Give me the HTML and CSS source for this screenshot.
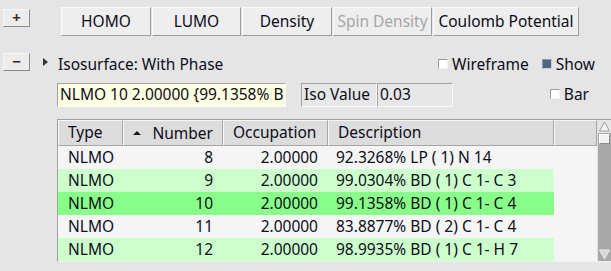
FILE: index.html
```html
<!DOCTYPE html>
<html>
<head>
<meta charset="utf-8">
<link rel="stylesheet" href="styles.css">
</head>
<body>
<div class="row1">
  <div class="small-btn">+</div>
  <div class="btn-group">
    <div class="btn w-homo">HOMO</div>
    <div class="btn w-lumo">LUMO</div>
    <div class="btn w-dens">Density</div>
    <div class="btn w-spin disabled">Spin Density</div>
    <div class="btn w-coul">Coulomb Potential</div>
  </div>
</div>
<div class="row2">
  <div class="small-btn">−</div>
  <div class="expander"></div>
  <div class="label">Isosurface: With Phase</div>
  <div class="checks">
    <div class="check"><span class="box"></span><span class="label">Wireframe</span></div>
    <div class="check show"><span class="box checked"></span><span class="label">Show</span></div>
  </div>
</div>
<div class="row3">
  <div class="field yellow">NLMO 10 2.00000 {99.1358% B</div>
  <div class="field iso">Iso Value</div>
  <div class="field val">0.03</div>
  <div class="check bar"><span class="box"></span><span class="label">Bar</span></div>
</div>
<div class="table">
  <div class="grid-area">
    <div class="grid head">
      <div class="hc">Type</div>
      <div class="hc right"><span class="sort"></span><span>Number</span></div>
      <div class="hc">Occupation</div>
      <div class="hc">Description</div>
      <div class="hc"></div>
    </div>
    <div class="grid row plain">
      <div class="c">NLMO</div><div class="c r">8</div><div class="c r">2.00000</div><div class="c d">92.3268% LP ( 1) N 14</div><div class="c x"></div>
    </div>
    <div class="grid row light">
      <div class="c">NLMO</div><div class="c r">9</div><div class="c r">2.00000</div><div class="c d">99.0304% BD ( 1) C 1- C 3</div><div class="c x"></div>
    </div>
    <div class="grid row bright">
      <div class="c">NLMO</div><div class="c r">10</div><div class="c r">2.00000</div><div class="c d">99.1358% BD ( 1) C 1- C 4</div><div class="c x"></div>
    </div>
    <div class="grid row plain">
      <div class="c">NLMO</div><div class="c r">11</div><div class="c r">2.00000</div><div class="c d">83.8877% BD ( 2) C 1- C 4</div><div class="c x"></div>
    </div>
    <div class="grid row light">
      <div class="c">NLMO</div><div class="c r">12</div><div class="c r">2.00000</div><div class="c d">98.9935% BD ( 1) C 1- H 7</div><div class="c x"></div>
    </div>
  </div>
  <div class="scrollbar">
    <div class="sb-up"><svg width="13" height="13" viewBox="0 0 13 13"><polygon points="6.5,2 11.5,11 1.5,11" fill="#f4f4f4" stroke="#9a9a9a" stroke-width="1"/></svg></div>
    <div class="sb-thumb"></div>
    <div class="sb-track"></div>
    <div class="sb-down"><svg width="13" height="12" viewBox="0 0 13 12"><polygon points="1.5,1 11.5,1 6.5,10" fill="#d8d8d8" stroke="#ececec" stroke-width="1"/></svg></div>
  </div>
</div>
</body>
</html>
```

FILE: styles.css
```css
html, body {
  margin: 0;
  padding: 0;
}
body {
  background: #e5e5e5;
  font-family: "Noto Sans", "Open Sans", sans-serif;
  font-size: 15.5px;
  color: #0d0d1a;
  width: 611px;
  height: 271px;
  overflow: hidden;
}
.row1 {
  display: flex;
  align-items: flex-start;
  padding-top: 7px;
  height: 29px;
}
.small-btn {
  box-sizing: border-box;
  width: 27px;
  height: 18px;
  margin-left: 3px;
  background: #ececec;
  border: 1px solid;
  border-color: #f8f8f8 #8c8c8c #8c8c8c #f8f8f8;
  font-size: 15px;
  line-height: 15px;
  text-align: center;
  font-weight: bold;
  color: #333;
}
.row1 .small-btn { margin-top: 2px; }
.btn-group {
  display: flex;
  margin-left: 31px;
  gap: 1px;
}
.btn {
  box-sizing: border-box;
  height: 29px;
  background: #eeeeee;
  border: 1px solid;
  border-color: #fbfbfb #9c9c9c #9c9c9c #fbfbfb;
  text-align: center;
  line-height: 26px;
  white-space: nowrap;
}
.w-homo { width: 90px; }
.w-lumo { width: 89px; }
.w-dens { width: 90px; }
.w-spin { width: 99px; }
.w-coul { width: 146px; }
.btn.disabled { color: #a6a6a6; }

.row2 {
  display: flex;
  align-items: flex-start;
  margin-top: 17px;
  height: 30px;
}
.expander {
  width: 0;
  height: 0;
  margin-left: 13px;
  margin-top: 5px;
  border-top: 4px solid transparent;
  border-bottom: 4px solid transparent;
  border-left: 5px solid #333;
}
.label {
  line-height: 20px;
  white-space: nowrap;
}
.row2 > .label {
  margin-left: 10px;
  margin-top: 1px;
}
.checks {
  display: flex;
  margin-left: auto;
  margin-right: 16px;
  gap: 13px;
  margin-top: 1px;
}
.check {
  display: flex;
  align-items: center;
  gap: 4px;
}
.box {
  box-sizing: border-box;
  width: 10px;
  height: 10px;
  background: #ffffff;
  border: 1px solid;
  border-color: #9a9a9a #f2f2f2 #f2f2f2 #9a9a9a;
}
.box.checked {
  background: #4c6884;
  border-color: #8a9aab #c9d2db #c9d2db #8a9aab;
}

.row3 {
  display: flex;
  align-items: flex-start;
  height: 36px;
}
.field {
  box-sizing: border-box;
  height: 24px;
  border: 1px solid;
  border-color: #a2a2a2 #fbfbfb #fbfbfb #a2a2a2;
  line-height: 21px;
  white-space: nowrap;
  overflow: hidden;
  padding-left: 2px;
}
.field.yellow {
  margin-left: 57px;
  width: 229px;
  background: #ffffe1;
}
.field.iso {
  margin-left: 15px;
  width: 76px;
  background: #e7e7e7;
}
.field.val {
  width: 76px;
  background: #e7e7e7;
}
.check.bar {
  margin-left: auto;
  margin-right: 22px;
  margin-top: 1px;
}

.table {
  display: flex;
  box-sizing: border-box;
  margin-left: 57px;
  width: 554px;
  height: 143px;
  border-top: 1px solid #a0a0a0;
  border-left: 1px solid #a0a0a0;
  border-bottom: 1px solid #f0f0f0;
  background: #f5f5f5;
}
.grid-area {
  width: 539px;
}
.grid {
  display: grid;
  grid-template-columns: 65px 100px 105px 226px 43px;
}
.head {
  height: 26px;
}
.hc {
  box-sizing: border-box;
  background: #dcdcdc;
  border: 1px solid;
  border-color: #f6f6f6 #a6a6a6 #a6a6a6 #f6f6f6;
  line-height: 23px;
  padding-left: 9px;
  white-space: nowrap;
}
.hc.right {
  display: flex;
  align-items: center;
  justify-content: space-between;
  padding-left: 9px;
  padding-right: 9px;
}
.sort {
  width: 0;
  height: 0;
  border-left: 4px solid transparent;
  border-right: 4px solid transparent;
  border-bottom: 4px solid #1a1a1a;
}
.row {
  height: 23px;
  line-height: 23px;
}
.c {
  padding-left: 10px;
  white-space: nowrap;
}
.c.r {
  text-align: right;
  padding-left: 0;
  padding-right: 10px;
}
.c.d { padding-left: 8px; }
.plain .c { background: #f5f5f5; }
.light .c { background: #ccffcc; }
.bright .c { background: #88ff88; }
.row .c.x { background: #f5f5f5; }

.scrollbar {
  display: flex;
  flex-direction: column;
  width: 14px;
  background: #a9a9a9;
  border-left: 1px solid #e0e0e0;
}
.sb-up {
  height: 13px;
  background: #e6e6e6;
  display: flex;
}
.sb-thumb {
  box-sizing: border-box;
  height: 10px;
  margin: 1px 1px 0 1px;
  background: #f2f2f2;
  border: 1px solid;
  border-color: #ffffff #8a8a8a #8a8a8a #ffffff;
}
.sb-track { flex: 1; }
.sb-down {
  height: 12px;
  display: flex;
}
```
